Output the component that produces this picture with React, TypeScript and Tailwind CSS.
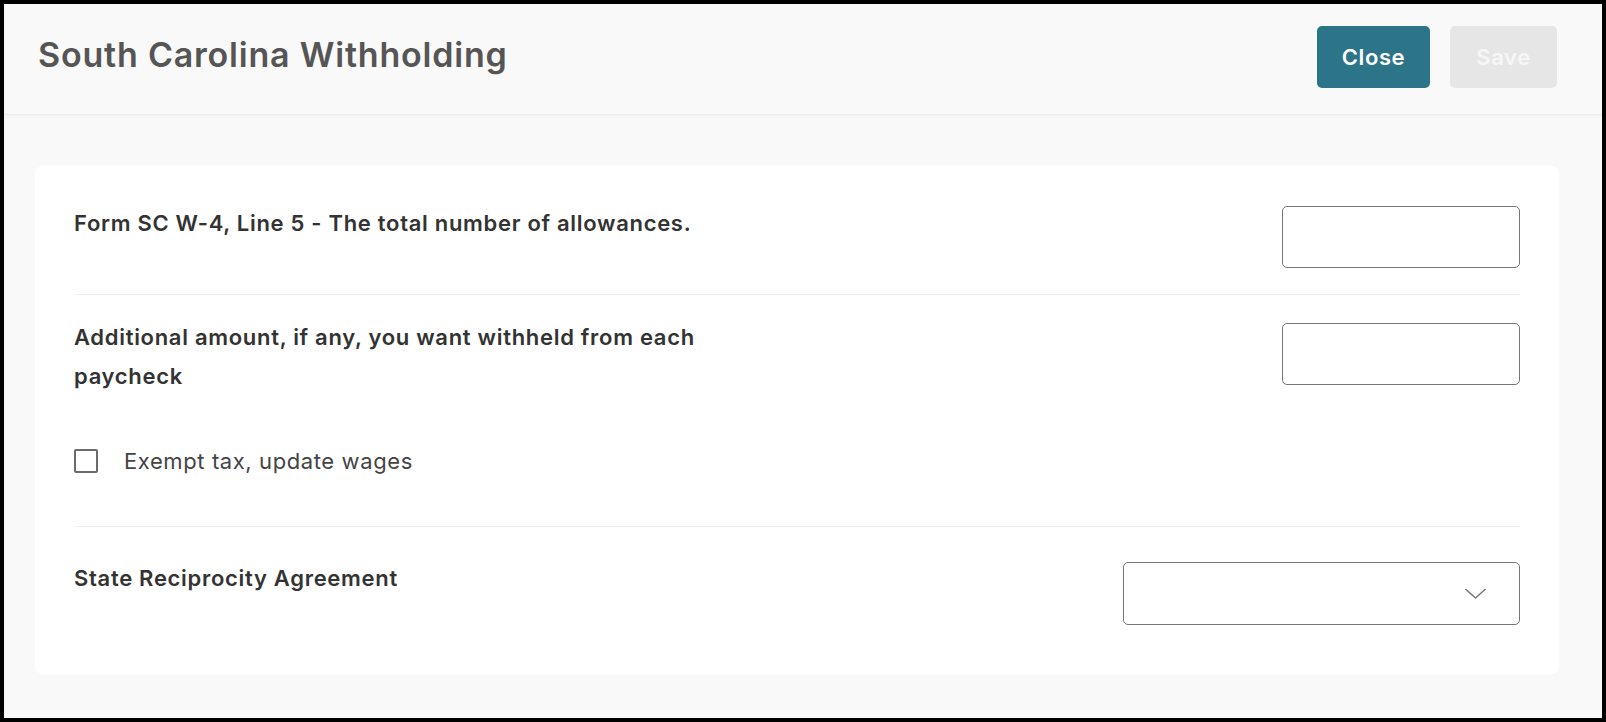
import React from "react";

const font = { fontFamily: "Inter, Lato, 'Open Sans', Arial, sans-serif" };

function TextBox() {
  return (
    <input
      type="text"
      className="w-[238px] h-[62px] shrink-0 rounded-[5px] border border-[#767676] bg-white outline-none"
    />
  );
}

export default function App() {
  return (
    <div
      className="w-[1606px] h-[722px] border-4 border-black bg-[#f9f9f9] flex flex-col"
      style={font}
    >
      <header className="h-[111px] shrink-0 flex items-start justify-between pt-[22px] pl-[34px] pr-[45px] border-b border-[#ececec] shadow-[0_2px_4px_rgba(0,0,0,0.03)]">
        <h1 className="mt-[9px] text-[34px] leading-[40px] font-semibold text-[#555555] tracking-[0.8px]">
          South Carolina Withholding
        </h1>
        <div className="flex items-center gap-[20px]">
          <button className="w-[113px] h-[62px] rounded-[5px] bg-[#2c7589] text-white text-[22px] font-semibold tracking-[0.6px]">
            Close
          </button>
          <button className="w-[107px] h-[62px] rounded-[5px] bg-[#e6e6e6] text-[#f6f6f6] text-[22px] font-semibold tracking-[0.6px]">
            Save
          </button>
        </div>
      </header>

      <main className="pt-[51px] pl-[31px] pr-[43px]">
        <section className="h-[508px] rounded-[8px] bg-white px-[39px] pt-[40px] text-[#333333]">
          <div className="flex items-start justify-between pb-[26px] border-b border-[#efefef]">
            <p className="-mt-[2px] text-[22px] font-semibold leading-[39px] tracking-[0.7px]">
              Form SC W-4, Line 5 - The total number of allowances.
            </p>
            <TextBox />
          </div>

          <div className="flex items-start justify-between pt-[28px]">
            <p className="-mt-[5px] w-[730px] text-[22px] font-semibold leading-[39px] tracking-[0.7px]">
              Additional amount, if any, you want withheld from each paycheck
            </p>
            <TextBox />
          </div>

          <label className="flex items-center gap-[26px] mt-[50px] h-[30px]">
            <span className="w-[24px] h-[24px] rounded-[2px] border-2 border-[#6b6b6b] bg-white" />
            <span className="text-[22px] text-[#444444] tracking-[0.6px]">Exempt tax, update wages</span>
          </label>

          <div className="mt-[50px] border-b border-[#efefef]" />

          <div className="flex items-start justify-between pt-[35px]">
            <p className="-mt-[3px] text-[22px] font-semibold leading-[39px] tracking-[0.7px]">
              State Reciprocity Agreement
            </p>
            <div className="w-[397px] h-[63px] rounded-[5px] border border-[#767676] bg-white flex items-center justify-end pr-[33px]">
              <svg width="21" height="12" viewBox="0 0 21 12" fill="none">
                <polyline
                  points="1,1.5 10.5,10 20,1.5"
                  stroke="#777777"
                  strokeWidth="1.6"
                  strokeLinecap="round"
                  strokeLinejoin="round"
                />
              </svg>
            </div>
          </div>
        </section>
      </main>
    </div>
  );
}
